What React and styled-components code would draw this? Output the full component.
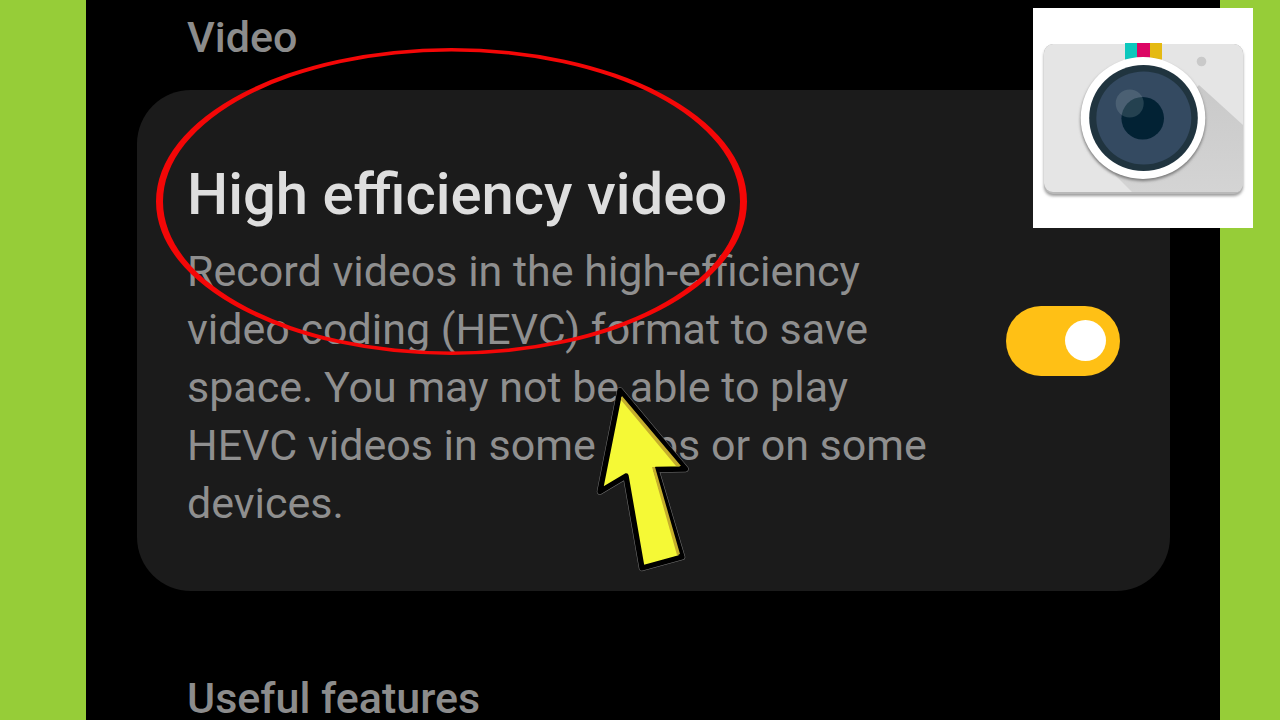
import React, { useState } from "react";
import styled, { createGlobalStyle } from "styled-components";

const GlobalStyle = createGlobalStyle`
  * {
    box-sizing: border-box;
  }

  body {
    margin: 0;
    background-color: #96cd38;
    font-family: Roboto, "Liberation Sans", sans-serif;
  }
`;

const Page = styled.div`
  position: relative;
  height: 100vh;
  padding: 0 60px 0 86px;
  overflow: hidden;
`;

const Screen = styled.main`
  min-height: 100%;
  padding: 16px 50px 0 51px;
  background-color: #000;
`;

const SectionTitle = styled.h2`
  margin: 0;
  padding-left: 50px;
  color: #8c8c8c;
  font-size: 43px;
  font-weight: 500;
  line-height: 42px;
`;

const Card = styled.section`
  display: flex;
  align-items: center;
  gap: 56px;
  margin: 32px 0 86px;
  padding: 59px 50px;
  border-radius: 54px;
  background-color: #1b1b1b;
`;

const SettingText = styled.div`
  flex: 1;
  padding-top: 13px;
`;

const SettingName = styled.label`
  display: block;
  margin-bottom: 16px;
  color: #dedede;
  font-size: 58px;
  font-weight: 500;
  line-height: 64px;
`;

const Description = styled.p`
  margin: 0;
  color: #8f8f8f;
  font-size: 43px;
  line-height: 58px;
`;

const Switch = styled.input`
  appearance: none;
  display: flex;
  flex-shrink: 0;
  align-items: center;
  justify-content: flex-start;
  width: 114px;
  height: 70px;
  margin: 0;
  padding: 0 14px;
  border-radius: 35px;
  background-color: #555;
  cursor: pointer;

  &::before {
    content: "";
    width: 41px;
    height: 41px;
    border-radius: 50%;
    background-color: #fff;
  }

  &:checked {
    justify-content: flex-end;
    background-color: #ffc015;
  }
`;

const AppBadge = styled.div`
  position: absolute;
  top: 8px;
  right: 27px;
  width: 220px;
  height: 220px;
  background-color: #fff;
`;

const Circle = styled.svg`
  position: absolute;
  top: 47px;
  left: 155px;
  pointer-events: none;
`;

const Pointer = styled.svg`
  position: absolute;
  top: 380px;
  left: 590px;
  pointer-events: none;
`;

const CameraIcon = () => (
  <svg width="220" height="220" viewBox="0 0 220 220" aria-hidden="true">
    <defs>
      <clipPath id="camera-body">
        <rect x="11" y="36" width="199" height="149" rx="9" />
      </clipPath>
      <linearGradient id="long-shadow" x1="0" y1="0" x2="0" y2="1">
        <stop offset="0" stopColor="#c9c9c9" />
        <stop offset="1" stopColor="#d4d4d4" />
      </linearGradient>
      <filter id="soft" x="-10%" y="-10%" width="120%" height="120%">
        <feGaussianBlur stdDeviation="1.4" />
      </filter>
    </defs>
    <rect x="11" y="39" width="199" height="149" rx="9" fill="#999" filter="url(#soft)" />
    <rect x="11" y="36" width="199" height="150" rx="9" fill="#b9b9b9" />
    <g clipPath="url(#camera-body)">
      <rect x="11" y="36" width="199" height="148" rx="9" fill="#e5e5e5" />
      <path d="M166 77 L211 118 V184 H99 L82 167 Z" fill="url(#long-shadow)" />
    </g>
    <rect x="92" y="35" width="12" height="24" fill="#0cc8bd" />
    <rect x="104" y="35" width="13" height="24" fill="#dc0664" />
    <rect x="117" y="35" width="12" height="24" fill="#e5ba12" />
    <circle cx="168.5" cy="53.5" r="4.8" fill="#c9c9c9" />
    <ellipse cx="110" cy="112" rx="62.5" ry="61" fill="#777" filter="url(#soft)" />
    <ellipse cx="110" cy="110" rx="62.3" ry="61" fill="#fff" />
    <ellipse cx="110.5" cy="110" rx="54.3" ry="53" fill="#20343f" />
    <ellipse cx="110.8" cy="110" rx="47.5" ry="46.5" fill="#344a61" />
    <circle cx="109.7" cy="110.3" r="21.3" fill="#022234" />
    <circle cx="96.7" cy="95.5" r="14" fill="#9fb0b8" opacity="0.22" />
  </svg>
);

const RedCircle = () => (
  <Circle width="592" height="309" viewBox="0 0 592 309" aria-hidden="true">
    {/* outer minus inner ellipse, so the line is thicker on the sides */}
    <path
      d="M1 154.5 A295.5 153.5 0 0 1 592 154.5 A295.5 153.5 0 0 1 1 154.5 Z
         M8 154.5 A288.5 150 0 0 0 585 154.5 A288.5 150 0 0 0 8 154.5 Z"
      fill="#f40707"
      fillRule="evenodd"
    />
  </Circle>
);

const YellowArrow = () => {
  const outline = "M30 10.5 L95.5 89 L66 89.5 L92 177 L52 188 L36 96 L10 111.5 Z";

  return (
    <Pointer width="106" height="198" viewBox="0 0 106 198" aria-hidden="true">
      <path d={outline} fill="none" stroke="#777" strokeWidth="6.4" strokeLinejoin="round" />
      <path d={outline} fill="#f5f936" stroke="#000" strokeWidth="5.4" strokeLinejoin="round" />
      <path
        d="M32 16 L91 86 L86 86 L31 20 Z M62 87 L65 87 L90 174 L87 175 Z"
        fill="#c5ae2c"
      />
    </Pointer>
  );
};

const App = () => {
  const [highEfficiency, setHighEfficiency] = useState(true);

  return (
    <>
      <GlobalStyle />
      <Page>
        <Screen>
          <SectionTitle>Video</SectionTitle>
          <Card>
            <SettingText>
              <SettingName htmlFor="high-efficiency">High efficiency video</SettingName>
              <Description id="high-efficiency-info">
                Record videos in the high-efficiency video coding (HEVC) format to save
                space. You may not be able to play HEVC videos in some apps or on some
                devices.
              </Description>
            </SettingText>
            <Switch
              id="high-efficiency"
              type="checkbox"
              role="switch"
              aria-describedby="high-efficiency-info"
              checked={highEfficiency}
              onChange={(e) => setHighEfficiency(e.target.checked)}
            />
          </Card>
          <SectionTitle>Useful features</SectionTitle>
        </Screen>
        <AppBadge>
          <CameraIcon />
        </AppBadge>
        <RedCircle />
        <YellowArrow />
      </Page>
    </>
  );
};

export default App;
